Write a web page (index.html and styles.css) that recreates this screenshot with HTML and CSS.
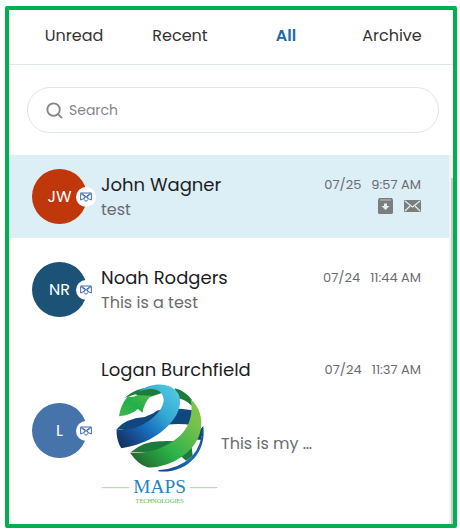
FILE: index.html
```html
<!DOCTYPE html>
<html lang="en">
<head>
<meta charset="utf-8">
<title>Messages</title>
<link rel="stylesheet" href="styles.css">
</head>
<body>
<svg width="0" height="0" class="defs" aria-hidden="true">
  <symbol id="mail-out" viewBox="0 0 36 30">
    <path d="M2 4l11 9v6L2 24zM34 4l-11 9v6l11 5zM2 3h32M5 4l13 10L31 4M13 18l5-4 5 4M11 22l7 6 7-6" fill="none" stroke="#3f68b0" stroke-width="3"/>
  </symbol>
</svg>
<main class="panel">
  <nav class="tabs">
    <a class="tab" href="#unread">Unread</a>
    <a class="tab" href="#recent">Recent</a>
    <a class="tab active" href="#all">All</a>
    <a class="tab" href="#archive">Archive</a>
  </nav>
  <label class="search">
    <svg class="search-icon" viewBox="0 0 18 18" aria-hidden="true"><circle cx="8" cy="8" r="6.6"/><path d="M12.8 12.8L17 17"/></svg>
    <input type="search" placeholder="Search" aria-label="Search">
  </label>
  <section class="list">
    <article class="row selected">
      <div class="avatar red">JW<span class="badge"><svg><use href="#mail-out"/></svg></span></div>
      <div class="body">
        <div class="head"><h2>John Wagner</h2><p class="time"><span>07/25</span><span>9:57 AM</span></p></div>
        <div class="detail">
          <p>test</p>
          <div class="actions">
            <button aria-label="Archive"><svg class="archive" viewBox="0 0 15 16"><path d="M1 0h13l1 2v13l-1 1H1l-1-1V2z" fill="#7d7d7d"/><path d="M2 2h11" stroke="#b9c2c6"/><path d="M6 5.500h3V8h2.500l-4 4-4-4H6z" fill="#dceef6"/></svg></button>
            <button aria-label="Mark as unread"><svg class="mail" viewBox="0 0 17 12"><rect width="17" height="12" rx="1" fill="#7d7d7d"/><path d="M1 1l7.500 6L16 1M1 11l5-5M16 11l-5-5" fill="none" stroke="#dceef6" stroke-width="1.200"/></svg></button>
          </div>
        </div>
      </div>
    </article>
    <article class="row">
      <div class="avatar navy">NR<span class="badge"><svg><use href="#mail-out"/></svg></span></div>
      <div class="body">
        <div class="head"><h2>Noah Rodgers</h2><p class="time"><span>07/24</span><span>11:44 AM</span></p></div>
        <div class="detail"><p>This is a test</p></div>
      </div>
    </article>
    <article class="row">
      <div class="avatar blue">L<span class="badge"><svg><use href="#mail-out"/></svg></span></div>
      <div class="body">
        <div class="head"><h2>Logan Burchfield</h2><p class="time"><span>07/24</span><span>11:37 AM</span></p></div>
        <div class="detail with-logo">
          <svg class="logo" viewBox="33 84 351 363" role="img" aria-label="MAPS Technologies">
            <defs>
              <linearGradient id="cyan" x1="1" y1="0" x2="0" y2="1"><stop offset="0.100" stop-color="#4cc5df"/><stop offset="0.350" stop-color="#36a9d4"/><stop offset="0.600" stop-color="#1670bd"/><stop offset="0.800" stop-color="#174787"/><stop offset="1" stop-color="#102b51"/></linearGradient>
              <linearGradient id="lime" x1="1" y1="0" x2="0" y2="1"><stop offset="0.200" stop-color="#7cc34b"/><stop offset="0.600" stop-color="#2bb24a"/><stop offset="0.850" stop-color="#237b35"/><stop offset="1" stop-color="#1d4521"/></linearGradient>
              <linearGradient id="rim" x1="0" y1="1" x2="1" y2="0"><stop offset="0" stop-color="#123d7d"/><stop offset="0.500" stop-color="#196fb8"/><stop offset="1" stop-color="#164b87"/></linearGradient>
              <linearGradient id="arrow" x1="0" y1="1" x2="1" y2="0"><stop offset="0" stop-color="#47b549"/><stop offset="0.500" stop-color="#20b04b"/><stop offset="1" stop-color="#54b948"/></linearGradient>
            </defs>
            <g transform="translate(60 75)">
              <path d="M44 53Q86 16 142 25L158 38 108 55 76 43Z" fill="#1c7b3b"/>
              <path d="M194 25Q225 32 246 60L246 78Q224 57 203 55Z" fill="#1c7b3b"/>
              <path d="M140 92Q184 80 247 91L246 136Q204 127 143 138L104 123Z" fill="#10477e"/>
              <path d="M21 146Q46 116 104 111L151 91 164 145 90 158Z" fill="#10477e"/>
              <path d="M62 217Q101 182 155 184 216 180 245 201L248 228 228 242Q194 207 139 215Z" fill="#1c7b3b"/>
              <path d="M145 271Q205 268 246 229 273 200 280 140C290 218 230 282 145 274Z" fill="url(#rim)"/>
              <path d="M262 160L280 137Q280 159 272 180L248 177Z" fill="#10477e"/>
              <path d="M85 35C129 2 190 8 207 45 223 95 174 150 120 178Q80 198 34 205C21 184 19 162 20 147 66 158 124 127 150 90 179 48 148 10 85 35Z" fill="url(#cyan)"/>
              <path d="M242 58C269 80 279 119 272 149 263 202 210 242 163 255Q132 265 112 262 84 253 60 218 100 221 144 207C213 181 256 133 242 58Z" fill="url(#lime)"/>
              <path d="M27 109Q31 76 54 48 65 56 83 45L123 47Q104 65 97 98L84 87Q60 107 27 109Z" fill="url(#arrow)"/>
            </g>
            <path d="M35 398h83M300 398h82" stroke="#a9dba5" stroke-width="3"/>
            <text class="brand" x="209" y="414">MAPS</text>
            <text class="tagline" x="209" y="444">TECHNOLOGIES</text>
          </svg>
          <p>This is my …</p>
        </div>
      </div>
    </article>
  </section>
</main>
</body>
</html>
```
FILE: styles.css
```css
* { box-sizing: border-box; }
body {
  margin: 0;
  padding: 6px 3px 2px 5px;
  min-height: 100vh;
  display: flex;
  background: #fff;
  color: #1d1d1f;
  font-family: Poppins, Inter, "Liberation Sans", sans-serif;
}
h2, p { margin: 0; font-weight: 400; }
.defs { position: absolute; }
.panel {
  flex: 1;
  min-width: 0;
  display: flex;
  flex-direction: column;
  border: 4px solid #00b050;
  border-radius: 2px;
}
.tabs {
  display: grid;
  grid-template-columns: repeat(4, 1fr);
  padding: 14px 8px 16px 12px;
  border-bottom: 1px solid #dfe4f1;
}
.tab {
  color: #333;
  font-size: 16px;
  line-height: 24px;
  text-align: center;
  text-decoration: none;
}
.active { color: #2268ad; font-weight: 600; }
.search {
  display: flex;
  align-items: center;
  gap: 6px;
  height: 46px;
  margin: 22px 14px 22px 18px;
  padding: 0 18px;
  border: 1px solid #dfe4f1;
  border-radius: 23px;
}
.search-icon {
  width: 17px;
  height: 17px;
  fill: none;
  stroke: #85858a;
  stroke-width: 2;
}
.search input {
  flex: 1;
  min-width: 0;
  padding: 0;
  border: 0;
  outline: 0;
  background: none;
  font: 14px/22px Poppins, Inter, "Liberation Sans", sans-serif;
}
.search input::placeholder { color: #85858a; opacity: 1; }
.list {
  flex: 1;
  display: flex;
  flex-direction: column;
  gap: 10px;
  padding-right: 4px;
  background:
    linear-gradient(#c8c8c8, #c8c8c8) right 23px / 2px 100% no-repeat,
    linear-gradient(#f3f3f3, #f3f3f3) right top / 4px 100% no-repeat;
}
.row {
  display: flex;
  align-items: center;
  gap: 14px;
  min-height: 83px;
  padding: 16px 28px 16px 23px;
}
.selected { background: #dceef6; }
.avatar {
  position: relative;
  flex: none;
  display: grid;
  place-items: center;
  width: 55px;
  height: 55px;
  margin: -3px 0;
  border-radius: 50%;
  color: #fff;
  font-size: 16px;
}
.red { background: #c0370b; }
.navy { background: #1b5275; }
.blue { background: #4773ab; }
.badge {
  position: absolute;
  right: -9px;
  top: 18px;
  display: grid;
  place-items: center;
  width: 20px;
  height: 20px;
  border-radius: 50%;
  background: #fff;
}
.badge svg { width: 12px; height: 10px; }
.body { flex: 1; min-width: 0; }
.head, .detail {
  display: flex;
  align-items: center;
  justify-content: space-between;
}
.head h2 { font-size: 18px; line-height: 26px; white-space: nowrap; }
.time {
  display: flex;
  gap: 10px;
  color: #6b6b70;
  font-size: 13px;
  white-space: nowrap;
}
.detail { color: #6b6b70; font-size: 16px; line-height: 24px; }
.actions {
  display: flex;
  align-items: center;
  align-self: flex-start;
  gap: 11px;
}
.actions button {
  display: flex;
  padding: 0;
  border: 0;
  background: none;
}
.archive { width: 15px; height: 16px; }
.mail { width: 17px; height: 12px; }
.with-logo { justify-content: flex-start; gap: 3px; }
.logo { width: 117px; height: 121px; }
.brand, .tagline { font-family: "Liberation Serif", serif; text-anchor: middle; }
.brand { font-size: 58px; fill: #2c83bd; }
.tagline { font-size: 19px; fill: #54b948; }
```
